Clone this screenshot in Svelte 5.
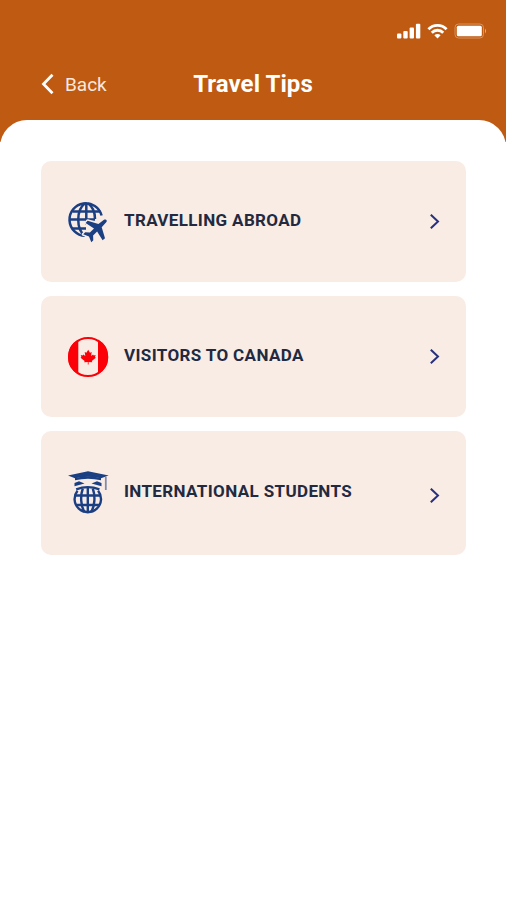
<script lang="ts">
  const tips = [
    { id: 'abroad', label: 'Travelling Abroad' },
    { id: 'canada', label: 'Visitors to Canada' },
    { id: 'students', label: 'International Students' }
  ];
</script>

<div class="screen">
  <header>
    <div class="status">
      <svg width="24" height="16" viewBox="0 0 24 16" fill="#fff">
        <rect x="0" y="10.5" width="4.4" height="5" rx="1" />
        <rect x="6.3" y="8" width="4.4" height="7.5" rx="1" />
        <rect x="12.6" y="4.5" width="4.4" height="11" rx="1" />
        <rect x="18.9" y="0.7" width="4.4" height="14.8" rx="1" />
      </svg>
      <svg width="21" height="16" viewBox="0 0 22 16" fill="none" stroke="#fff" stroke-width="3">
        <path d="M1.5 6.2C6.7.8 15.3.8 20.5 6.2" />
        <path d="M5 9.8C8.4 6.4 13.6 6.4 17 9.8" />
        <path d="M7.7 12.5C9.6 10.7 12.4 10.7 14.3 12.5L11 15.8Z" fill="#fff" stroke="none" />
      </svg>
      <svg width="34" height="16" viewBox="0 0 34 16">
        <rect x="1" y="1" width="28.5" height="14" rx="3.5" fill="none" stroke="#d9935f" />
        <rect x="2.8" y="2.8" width="25" height="10.4" rx="1.5" fill="#fff" />
        <path d="M31 5.5q2 2.5 0 5z" fill="#e3ad88" />
      </svg>
    </div>
    <div class="nav">
      <button class="back">
        <svg width="14" height="22" viewBox="0 0 14 22" fill="none" stroke="#fff" stroke-width="2.8">
          <path d="M12.5 1.8L3.5 11l9 9.2" />
        </svg>
        <span>Back</span>
      </button>
      <h1>Travel Tips</h1>
    </div>
  </header>

  <main>
    {#each tips as tip}
      <button class="card {tip.id}">
        {#if tip.id === 'abroad'}
          <svg class="icon" viewBox="0 0 42 44" fill="none" stroke="#1b3f83" stroke-width="2.5">
            <path d="M18 35.8A16.3 16.3 0 1 1 34.6 15.5" />
            <path d="M18 35.8C9 29.5 9 10 18 3.3M21 3.3C26 7 28 12.5 28 19M19.3 3V25M5.5 11.5H33.5M3 19.5H28M5.5 28.5H19" />
            <path
              d="M35.5 19.3c1.8-1.2 3.6.4 2.4 2.3L33.2 26.7l3.3 11-2.4 2-5.5-8.7-4 4 .2 4.8-2 2-2.3-5.7-5.8-2.3 2-2 4.7.2 4.1-4-8.4-5.5 2-2.3 10.8 3.2z"
              transform="translate(1.5 .5)"
              fill="#1b3f83"
              stroke="#f9ece5"
              stroke-width="3"
              stroke-linejoin="round"
              paint-order="stroke"
            />
          </svg>
        {:else if tip.id === 'canada'}
          <svg class="icon" viewBox="0 0 42 44">
            <circle cx="21" cy="22" r="19" fill="#f9ece5" stroke="#fb0007" stroke-width="2" />
            <path d="M11.3 4.5a20 20 0 0 0 0 35zM31 4.5a20 20 0 0 1 0 35z" fill="#fb0007" />
            <path
              d="M21.2 14.8l1.8 3 1.7-.7-.6 4 2-1.7.6 1 2-.3-.7 2 .8.7-4 3.3.4 1.2-3.6-.4v2.6h-.8v-2.6l-3.6.4.4-1.2-4-3.3.8-.7-.7-2 2 .3.6-1 2 1.7-.6-4 1.7.7z"
              fill="#fb0007"
            />
          </svg>
        {:else}
          <svg class="icon" viewBox="0 0 42 44" fill="none" stroke="#1b3f83" stroke-width="2.4">
            <path d="M1 4.5L21 .2l20.7 4.3L34 7.2q-13-3-26 0z" fill="#1b3f83" stroke="none" />
            <path d="M8 7q13-3.5 26 0v2.3q-13-3.2-26 0z" fill="#1b3f83" stroke="none" />
            <path d="M7.5 15.3V12l4.5-1.8 5.5 2.3zM34.5 15.3V12L30 10.2l-5.5 2.3z" fill="#1b3f83" stroke="none" />
            <path d="M38.8 6V19" stroke="#818aaa" stroke-width="1.8" />
            <path d="M10.5 19.8A13.2 13.2 0 1 0 31.1 19.8" />
            <path d="M9.2 18.3Q20.8 14 32.4 18.3M7.6 24.5H34M9.2 34H32.4" />
            <path d="M20.8 17V42M15.8 17.5C13.3 24.5 13.5 35 17.6 41M25.8 17.5C28.3 24.5 28.1 35 24 41" />
          </svg>
        {/if}
        <span class="label">{tip.label}</span>
        <svg class="arrow" width="12" height="16" viewBox="0 0 12 16" fill="none" stroke="#29307d" stroke-width="2">
          <path d="M1.8.7L9 7.5l-7.2 6.8" />
        </svg>
      </button>
    {/each}
  </main>
</div>

<style>
  :global(body) { margin: 0; background: #fff; }
  .screen { min-height: 900px; background: linear-gradient(#be5a11 142px, #fff 142px); font-family: Roboto, sans-serif; }
  button { border: 0; background: none; padding: 0; font: inherit; color: inherit; text-align: left; }
  header { height: 120px; box-sizing: border-box; padding-top: 23px; color: #fff; }
  .status { display: flex; justify-content: flex-end; gap: 6px; height: 16px; padding-right: 18px; }
  .nav { display: grid; grid-template-columns: 1fr auto 1fr; align-items: center; height: 30px; margin-top: 30px; }
  .back { display: flex; align-items: center; gap: 11px; padding-left: 40px; font-size: 19px; color: #fbe9df; }
  h1 { margin: 0; font-size: 24px; font-weight: 700; line-height: 30px; letter-spacing: 0.08px; }
  main { min-height: 780px; box-sizing: border-box; padding: 41px 40px 0 41px; border-radius: 27px 27px 0 0; background: #fff; display: flex; flex-direction: column; gap: 14px; }
  .card { display: flex; align-items: center; height: 121px; box-sizing: border-box; padding: 0 25px 0 26px; border-radius: 10px; background: #f9ece5; }
  .icon { width: 42px; height: 44px; flex: none; }
  .label { flex: 1; padding: 0 0 3px 15px; font-size: 17px; font-weight: 700; line-height: 20px; letter-spacing: 0.37px; text-transform: uppercase; white-space: nowrap; color: #222940; }
  .students { height: 124px; }
  .students .label { padding-bottom: 4px; }
  .students .arrow { margin-top: 5px; }
</style>
